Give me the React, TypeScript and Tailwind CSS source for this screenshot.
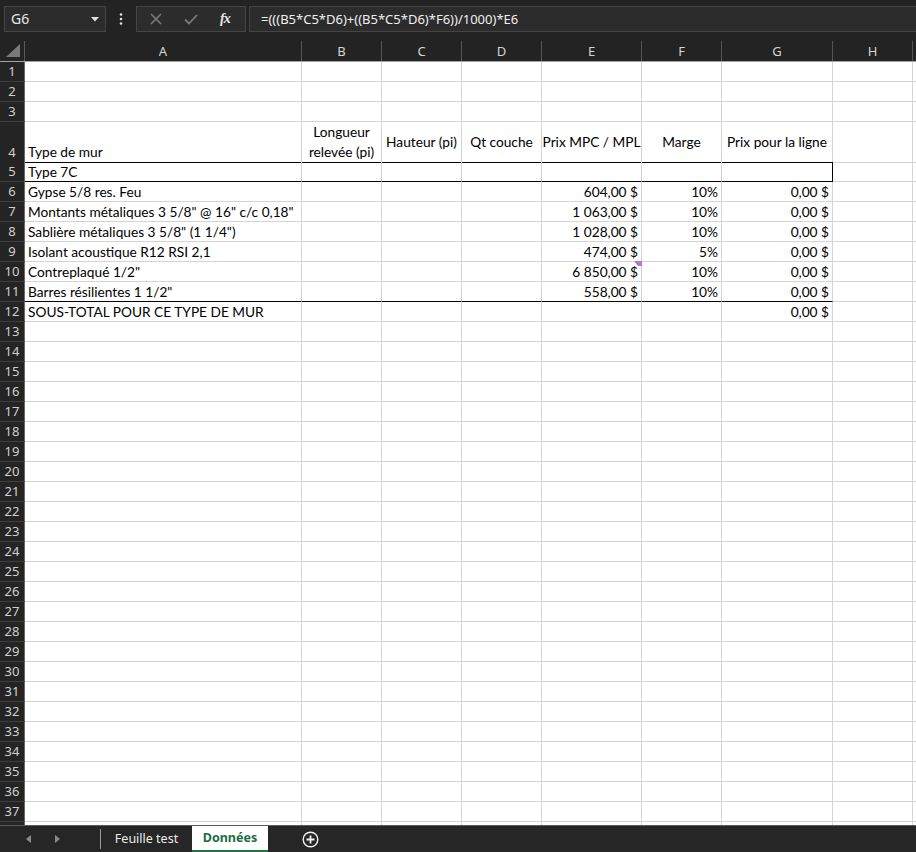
import React from 'react';

const GRID = 'grid grid-cols-[25px_277px_80px_80px_80px_100px_80px_111px_80px_1fr]';
const CELL_FONT = "font-['Lato','Liberation_Sans',sans-serif] text-[13.7px] text-black";

type Cell = {
  t?: string;
  align?: 'l' | 'r' | 'c';
  bottomBlack?: boolean;
  rightBlack?: boolean;
  comment?: boolean;
};

function RowHeader({ n, tall }: { n: number | string; tall?: boolean }) {
  return (
    <div
      className={`bg-[#242424] border-r border-r-[#6a6a6a] border-b border-b-[#3e3e3e] flex justify-center ${tall ? 'items-end pb-[3px]' : 'items-center'} font-['Noto_Sans','Open_Sans',sans-serif] text-[13px] text-[#d0d0d0] leading-none`}
    >
      {n}
    </div>
  );
}

function DataCell({ c, tall }: { c: Cell; tall?: boolean }) {
  const align = c.align === 'r' ? 'justify-end' : c.align === 'c' ? 'justify-center' : 'justify-start';
  return (
    <div
      className={`relative flex ${align} ${tall ? 'items-end pb-[3px]' : 'items-center'} px-[3px] border-r ${c.rightBlack ? 'border-r-black' : 'border-r-[#d4d4d4]'} border-b ${c.bottomBlack ? 'border-b-black' : 'border-b-[#d4d4d4]'} whitespace-nowrap overflow-visible ${CELL_FONT} leading-none`}
    >
      {c.t}
      {c.comment && (
        <svg className="absolute -right-[1px] -top-[1px]" width="8" height="5" viewBox="0 0 8 5">
          <polygon points="0,0 8,0 8,5 4,5" fill="#bf70d3" />
        </svg>
      )}
    </div>
  );
}

function Row({ n, cells, h = 'h-[20px]' }: { n: number; cells: Cell[]; h?: string }) {
  const full: Cell[] = [];
  for (let i = 0; i < 9; i++) full.push(cells[i] || {});
  return (
    <div className={`${GRID} ${h}`}>
      <RowHeader n={n} />
      {full.map((c, i) => (
        <DataCell key={i} c={c} />
      ))}
    </div>
  );
}

const blackB = (cells: Cell[]) => cells.map((c, i) => (i < 7 ? { ...c, bottomBlack: true } : c));

export default function App() {
  const dataRows: { n: number; a: string; e: string; f: string; comment?: boolean }[] = [
    { n: 6, a: 'Gypse 5/8 res. Feu', e: '604,00 $', f: '10%' },
    { n: 7, a: 'Montants métaliques 3 5/8" @ 16" c/c 0,18"', e: '1 063,00 $', f: '10%' },
    { n: 8, a: 'Sablière métaliques 3 5/8" (1 1/4")', e: '1 028,00 $', f: '10%' },
    { n: 9, a: 'Isolant acoustique R12 RSI 2,1', e: '474,00 $', f: '5%' },
    { n: 10, a: 'Contreplaqué 1/2"', e: '6 850,00 $', f: '10%', comment: true },
    { n: 11, a: 'Barres résilientes 1 1/2"', e: '558,00 $', f: '10%' },
  ];
  const emptyRows: number[] = [];
  for (let i = 13; i <= 37; i++) emptyRows.push(i);
  const cols = ['A', 'B', 'C', 'D', 'E', 'F', 'G', 'H'];

  return (
    <div className="w-[916px] h-[852px] bg-[#232323] flex flex-col overflow-hidden">
      {/* Formula bar */}
      <div className="h-[41px] flex items-start pt-[6px] pl-[4px] gap-[3px] shrink-0">
        <div className="w-[102px] h-[26px] bg-[#2c2c2c] border border-[#454545] flex items-center justify-between pl-[6px] pr-[6px]">
          <span className="font-['Noto_Sans','Open_Sans',sans-serif] text-[14px] text-[#e6e6e6] leading-none">G6</span>
          <svg width="8" height="5" viewBox="0 0 8 5">
            <polygon points="0,0 8,0 4,4.5" fill="#e0e0e0" />
          </svg>
        </div>
        <div className="w-[24px] h-[26px] flex items-center justify-center">
          <svg width="4" height="12" viewBox="0 0 4 12">
            <circle cx="2" cy="1.5" r="1.3" fill="#e0e0e0" />
            <circle cx="2" cy="6" r="1.3" fill="#e0e0e0" />
            <circle cx="2" cy="10.5" r="1.3" fill="#e0e0e0" />
          </svg>
        </div>
        <div className="w-[110px] h-[26px] bg-[#2c2c2c] border border-[#454545] flex items-center pl-[13px] gap-[22px]">
          <svg width="12" height="12" viewBox="0 0 12 12">
            <path d="M1 1 L11 11 M11 1 L1 11" stroke="#7a7a7a" strokeWidth="1.6" />
          </svg>
          <svg width="14" height="11" viewBox="0 0 14 11">
            <path d="M1 5.5 L5 9.5 L13 1" stroke="#7a7a7a" strokeWidth="1.8" fill="none" />
          </svg>
          <span className="font-['Liberation_Serif',serif] italic font-bold text-[14px] text-[#e6e6e6] leading-none tracking-[-1px]">fx</span>
        </div>
        <div className="flex-1 h-[26px] bg-[#2c2c2c] border border-[#454545] border-r-0 flex items-center pl-[11px]">
          <span className="font-['Noto_Sans','Open_Sans',sans-serif] text-[13px] text-[#f0f0f0] leading-none">
            =(((B5*C5*D6)+((B5*C5*D6)*F6))/1000)*E6
          </span>
        </div>
      </div>

      {/* Column headers */}
      <div className={`${GRID} h-[21px] shrink-0 border-b border-b-[#a3a3a3]`}>
        <div className="relative border-r border-r-[#5a5a5a]">
          <svg className="absolute left-[6px] top-[3px]" width="15" height="14" viewBox="0 0 15 14">
            <polygon points="14,0 14,13 0,13" fill="#7a7a7a" />
          </svg>
        </div>
        {cols.map((c) => (
          <div
            key={c}
            className="border-r border-r-[#555555] flex items-center justify-center font-['Noto_Sans','Open_Sans',sans-serif] text-[13px] text-[#d4d4d4] leading-none"
          >
            {c}
          </div>
        ))}
        <div />
      </div>

      {/* Sheet body */}
      <div className="bg-white flex flex-col flex-1 overflow-hidden">
        <Row n={1} cells={[]} />
        <Row n={2} cells={[]} />
        <Row n={3} cells={[]} />
        {/* Row 4 */}
        <div className={`${GRID} h-[40px]`}>
          <RowHeader n={4} tall />
          <DataCell tall c={{ t: 'Type de mur', bottomBlack: true }} />
          <div className={`flex flex-col items-center justify-center border-r border-r-[#d4d4d4] border-b border-b-black ${CELL_FONT} leading-[20px]`}>
            <span>Longueur</span>
            <span>relevée (pi)</span>
          </div>
          {['Hauteur (pi)', 'Qt couche', 'Prix MPC / MPL', 'Marge', 'Prix pour la ligne'].map((t) => (
            <div
              key={t}
              className={`flex items-center justify-center whitespace-nowrap border-r border-r-[#d4d4d4] border-b border-b-black ${CELL_FONT} leading-none pb-[1px]`}
            >
              {t}
            </div>
          ))}
          <DataCell c={{}} />
          <DataCell c={{}} />
        </div>
        <Row
          n={5}
          cells={[
            ...blackB([{ t: 'Type 7C' }, {}, {}, {}, {}, {}, { rightBlack: true }]),
          ]}
        />
        {dataRows.map((r) => {
          const cells: Cell[] = [
            { t: r.a },
            {},
            {},
            {},
            { t: r.e, align: 'r', comment: r.comment },
            { t: r.f, align: 'r' },
            { t: '0,00 $', align: 'r' },
          ];
          return <Row key={r.n} n={r.n} cells={r.n === 11 ? blackB(cells) : cells} />;
        })}
        <Row n={12} cells={[{ t: 'SOUS-TOTAL POUR CE TYPE DE MUR' }, {}, {}, {}, {}, {}, { t: '0,00 $', align: 'r' }]} />
        {emptyRows.map((n) => (
          <Row key={n} n={n} cells={[]} />
        ))}
        <div className={`${GRID} h-[3px]`}>
          <div className="bg-[#242424] border-r border-r-[#6a6a6a]" />
          {cols.map((c) => (
            <div key={c} className="border-r border-r-[#d4d4d4]" />
          ))}
          <div />
        </div>
      </div>

      {/* Sheet tabs */}
      <div className="h-[27px] shrink-0 bg-[#262626] border-t border-t-[#5a5a5a] flex items-stretch">
        <div className="w-[100px] flex items-center pl-[26px] gap-[24px]">
          <svg width="5" height="8" viewBox="0 0 5 8">
            <polygon points="5,0 5,8 0,4" fill="#8a8a8a" />
          </svg>
          <svg width="5" height="8" viewBox="0 0 5 8">
            <polygon points="0,0 0,8 5,4" fill="#8a8a8a" />
          </svg>
        </div>
        <div className="w-[1px] my-[3px] bg-[#9a9a9a]" />
        <div className="w-[91px] flex items-center justify-center font-['Noto_Sans','Open_Sans',sans-serif] text-[12.5px] text-[#ececec] leading-none">
          Feuille test
        </div>
        <div className="w-[76px] bg-white border-b-[2px] border-b-[#217346] flex items-center justify-center font-['Noto_Sans','Open_Sans',sans-serif] font-bold text-[12.5px] text-[#1e6b41] leading-none">
          Données
        </div>
        <div className="w-[84px] flex items-center justify-center">
          <svg width="17" height="17" viewBox="0 0 17 17">
            <circle cx="8.5" cy="8.5" r="7.3" stroke="#f0f0f0" strokeWidth="1.4" fill="none" />
            <path d="M8.5 4.5 V12.5 M4.5 8.5 H12.5" stroke="#f0f0f0" strokeWidth="1.8" />
          </svg>
        </div>
      </div>
    </div>
  );
}
